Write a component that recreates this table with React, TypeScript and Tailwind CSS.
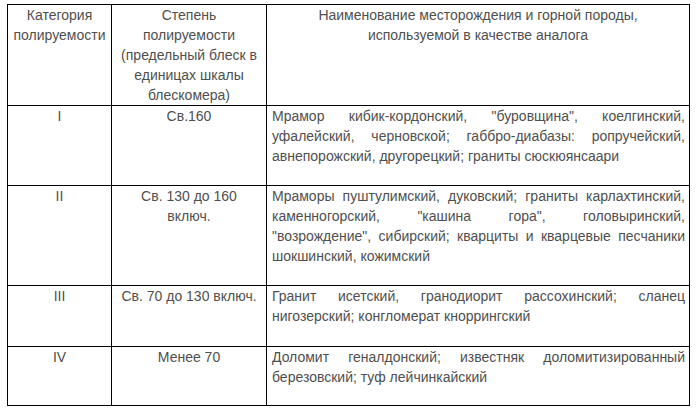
import React from "react";

const J = ({ lines }: { lines: string[] }) => (
  <>
    {lines.map((l, i) => (
      <div
        key={i}
        className={
          i < lines.length - 1
            ? "text-justify [text-align-last:justify]"
            : "text-left"
        }
      >
        {l}
      </div>
    ))}
  </>
);

const rows = [
  {
    cat: "I",
    deg: ["Св.160"],
    desc: [
      "Мрамор кибик-кордонский, \"буровщина\", коелгинский,",
      "уфалейский, черновской; габбро-диабазы: ропручейский,",
      "авнепорожский, другорецкий; граниты сюскюянсаари",
    ],
    pb: "pb-[19px]",
  },
  {
    cat: "II",
    deg: ["Св. 130 до 160", "включ."],
    desc: [
      "Мраморы пуштулимский, дуковский; граниты карлахтинский,",
      "каменногорский, \"кашина гора\", головыринский,",
      "\"возрождение\", сибирский; кварциты и кварцевые песчаники",
      "шокшинский, кожимский",
    ],
    pb: "pb-[19px]",
  },
  {
    cat: "III",
    deg: ["Св. 70 до 130 включ."],
    desc: [
      "Гранит исетский, гранодиорит рассохинский; сланец",
      "нигозерский; конгломерат кноррингский",
    ],
    pb: "pb-[20px]",
  },
  {
    cat: "IV",
    deg: ["Менее 70"],
    desc: [
      "Доломит геналдонский; известняк доломитизированный",
      "березовский; туф лейчинкайский",
    ],
    pb: "pb-[18px]",
  },
];

export default function App() {
  return (
    <div className="w-[697px] h-[414px] bg-white overflow-hidden pt-[4px] pl-[7px]">
      <table
        className="border-collapse table-fixed w-[682px] text-[14px] leading-[20px] text-[#4f4f4f]"
        style={{ fontFamily: '"Liberation Sans", Arial, sans-serif' }}
      >
        <colgroup>
          <col className="w-[104px]" />
          <col className="w-[155px]" />
          <col className="w-[423px]" />
        </colgroup>
        <thead>
          <tr>
            <th className="border border-black font-normal text-center align-top px-[5px] py-0">
              Категория
              <br />
              полируемости
            </th>
            <th className="border border-black font-normal text-center align-top px-[5px] py-0">
              Степень
              <br />
              полируемости
              <br />
              (предельный блеск в
              <br />
              единицах шкалы
              <br />
              блескомера)
            </th>
            <th className="border border-black font-normal text-center align-top px-[5px] py-0">
              Наименование месторождения и горной породы,
              <br />
              используемой в качестве аналога
            </th>
          </tr>
        </thead>
        <tbody>
          {rows.map((r) => (
            <tr key={r.cat}>
              <td className={`border border-black text-center align-top px-[5px] pt-0 ${r.pb}`}>
                {r.cat}
              </td>
              <td className={`border border-black text-center align-top px-[5px] pt-0 ${r.pb}`}>
                {r.deg.map((d, i) => (
                  <div key={i}>{d}</div>
                ))}
              </td>
              <td className={`border border-black align-top pl-[5px] pr-[4px] pt-0 ${r.pb}`}>
                <J lines={r.desc} />
              </td>
            </tr>
          ))}
        </tbody>
      </table>
    </div>
  );
}
